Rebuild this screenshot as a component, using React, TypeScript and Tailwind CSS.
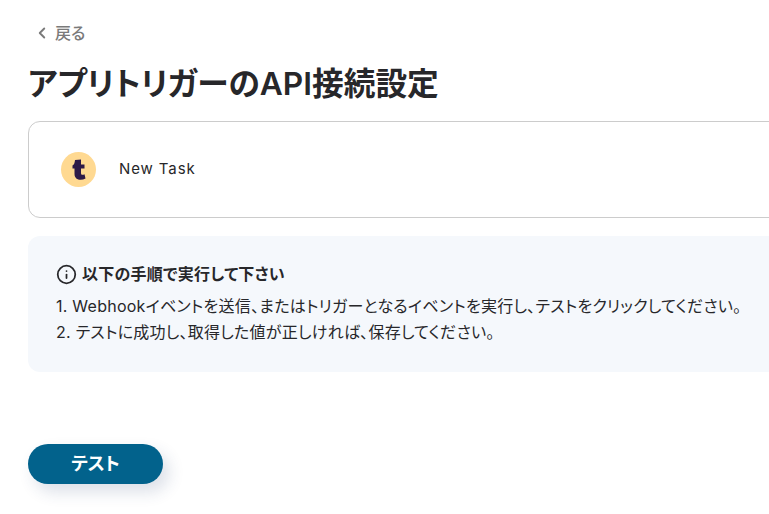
import React from 'react';
import { ChevronLeft, Info } from 'lucide-react';

const FONT = "font-['Inter','Noto_Sans_CJK_JP',sans-serif] [font-feature-settings:'palt']";

const App: React.FC = () => {
  return (
    <div className={`h-[514px] w-[769px] overflow-hidden bg-white pl-7 ${FONT}`}>
      {/* Back link */}
      <a href="#" className="mt-[23px] flex h-[19px] items-center pl-[5px] text-base font-medium text-[#7a7a7a]">
        <ChevronLeft className="h-[18px] w-[18px]" strokeWidth={2.5} />
        <span className="ml-1">戻る</span>
      </a>

      <h1 className="mt-[21px] whitespace-nowrap text-[31.7px] font-semibold leading-[42px] text-[#27272a]">
        アプリトリガーのAPI接続設定
      </h1>

      {/* Trigger card */}
      <div className="mt-4 flex h-[97px] w-[800px] items-center rounded-xl border border-[#cccccc] pl-[32px]">
        <div className="flex h-[35px] w-[35px] items-center justify-center rounded-full bg-[#ffd991]">
          <svg viewBox="0 0 20 24" className="h-[24px] w-[20px]">
            <path
              d="M6 2 L12 1.5 L12 6.5 L15.5 6.5 L15.5 10.5 L12 10.5 L12 15 C12 17 13.5 17.3 15.5 16.3 L16.5 20.5 C12 23 5.5 22 5.5 16 L5.5 10.5 L3.5 10.5 L3.5 7.5 C5 7 5.7 5 6 2 Z"
              fill="#2e1a47"
            />
          </svg>
        </div>
        <span className="ml-[23px] text-[15px] tracking-[0.9px] text-[#27272a]">New Task</span>
      </div>

      {/* Instructions */}
      <div className="mt-[18px] h-[136px] w-[800px] rounded-xl bg-[#f5f8fc] pl-[28px] pt-[27px]">
        <div className="flex h-[22px] items-center text-base font-bold tracking-[0.25px] text-[#27272a]">
          <Info className="h-[21px] w-[21px]" strokeWidth={2} />
          <span className="ml-[5px]">以下の手順で実行して下さい</span>
        </div>
        <ol className="mt-2 whitespace-nowrap text-base leading-[26px] tracking-[0.25px] text-[#27272a]">
          <li>1. Webhookイベントを送信、またはトリガーとなるイベントを実行し、テストをクリックしてください。</li>
          <li>2. テストに成功し、取得した値が正しければ、保存してください。</li>
        </ol>
      </div>

      <button className="mt-[72px] h-10 w-[135px] rounded-full bg-[#02628c] text-lg font-bold text-white shadow-[6px_8px_16px_rgba(40,60,110,0.16)]">
        テスト
      </button>
    </div>
  );
};

export default App;
